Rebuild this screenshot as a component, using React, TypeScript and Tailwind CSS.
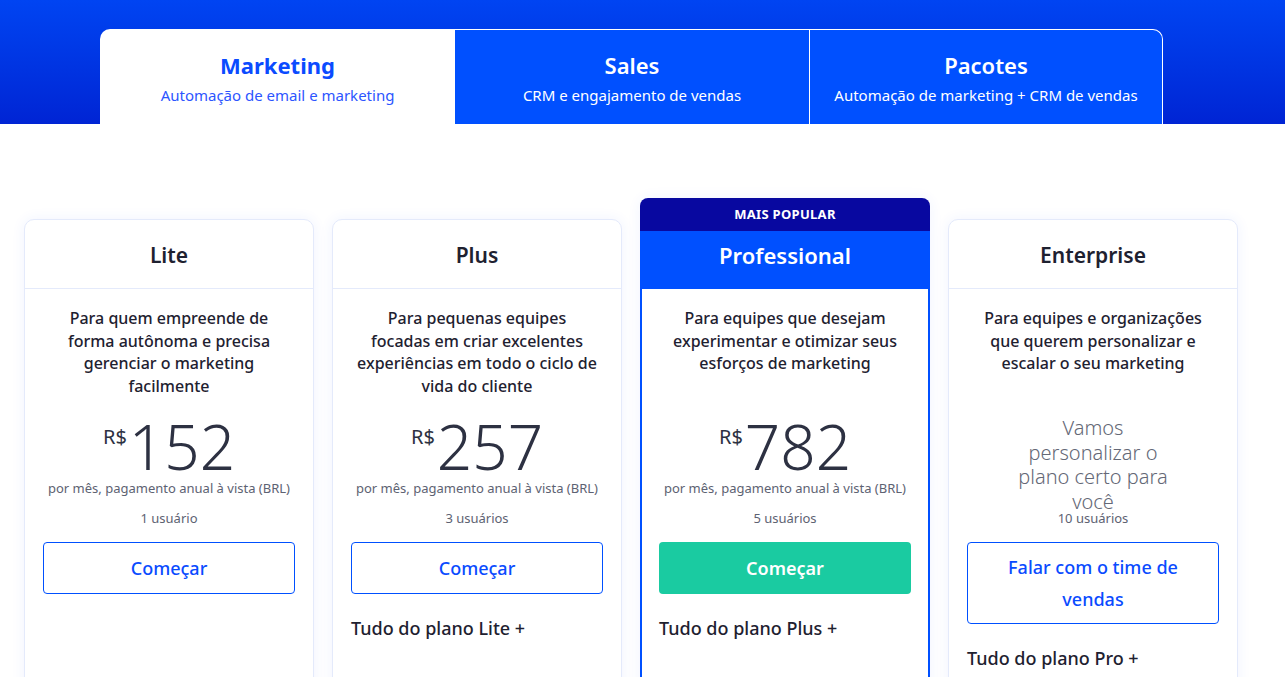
const font = { fontFamily: '"Noto Sans", "Open Sans", sans-serif' }

type Plan = {
	name: string
	desc: string
	price?: string
	users: string
	cta: string
	extra?: string
	popular?: boolean
}

const plans: Plan[] = [
	{
		name: 'Lite',
		desc: 'Para quem empreende de forma autônoma e precisa gerenciar o marketing facilmente',
		price: '152',
		users: '1 usuário',
		cta: 'Começar',
	},
	{
		name: 'Plus',
		desc: 'Para pequenas equipes focadas em criar excelentes experiências em todo o ciclo de vida do cliente',
		price: '257',
		users: '3 usuários',
		cta: 'Começar',
		extra: 'Tudo do plano Lite +',
	},
	{
		name: 'Professional',
		desc: 'Para equipes que desejam experimentar e otimizar seus esforços de marketing',
		price: '782',
		users: '5 usuários',
		cta: 'Começar',
		extra: 'Tudo do plano Plus +',
		popular: true,
	},
	{
		name: 'Enterprise',
		desc: 'Para equipes e organizações que querem personalizar e escalar o seu marketing',
		users: '10 usuários',
		cta: 'Falar com o time de vendas',
		extra: 'Tudo do plano Pro +',
	},
]

function Tabs() {
	return (
		<div className="bg-gradient-to-b from-[#0044f2] to-[#0024d4] pt-[29px]">
			<div className="ml-[100px] flex">
				<div className="flex h-[95px] w-[355px] flex-col items-center justify-center rounded-tl-[10px] bg-white pt-[2px]">
					<div className="text-[22px] font-bold leading-[28px] text-[#0b4bff]">Marketing</div>
					<div className="mt-[6px] text-[15px] leading-[20px] text-[#2c55ff]">
						Automação de email e marketing
					</div>
				</div>
				<div className="flex h-[95px] w-[354px] flex-col items-center justify-center border-t border-white bg-[#0050ff] pt-[2px] text-white">
					<div className="text-[22px] font-semibold leading-[28px]">Sales</div>
					<div className="mt-[6px] text-[15px] leading-[20px]">CRM e engajamento de vendas</div>
				</div>
				<div className="flex h-[95px] w-[354px] flex-col items-center justify-center rounded-tr-[10px] border-l border-r border-t border-white bg-[#0050ff] pt-[2px] text-white">
					<div className="text-[22px] font-semibold leading-[28px]">Pacotes</div>
					<div className="mt-[6px] text-[15px] leading-[20px]">Automação de marketing + CRM de vendas</div>
				</div>
			</div>
		</div>
	)
}

function PlanCard({ plan }: { plan: Plan }) {
	const popular = plan.popular
	return (
		<div
			className={`w-[290px] rounded-[10px] bg-white shadow-[0_0_14px_rgba(40,80,255,0.07)] ${
				popular ? '' : 'mt-[21px] border border-[#e4eafb]'
			}`}
		>
			{popular ? (
				<>
					<div className="flex h-[33px] items-center justify-center rounded-t-[8px] bg-[#0808a0] text-[13px] font-bold tracking-[0.3px] text-white">
						MAIS POPULAR
					</div>
					<div className="flex h-[58px] items-center justify-center bg-[#0050ff] pb-[10px] text-[22px] font-semibold text-white">
						{plan.name}
					</div>
				</>
			) : (
				<div className="flex h-[69px] items-center justify-center border-b border-[#e4eafb] pt-[4px] text-[21px] font-semibold text-[#1e2130]">
					{plan.name}
				</div>
			)}
			<div
				className={`h-[420px] text-center ${
					popular ? 'border-l-2 border-r-2 border-[#0050ff] px-[17px]' : 'px-[18px]'
				}`}
			>
				<div className="h-[108px] px-[6px] pt-[18px] text-[16px] font-medium leading-[22.5px] text-[#1e2130]">
					{plan.desc}
				</div>
				{plan.price ? (
					<>
						<div className="mt-[16px] flex h-[60px] items-start justify-center text-[#2d3142]">
							<span className="mr-[2px] mt-[14px] text-[20px] leading-none">R$</span>
							<span className="mt-[6px] text-[62px] font-light leading-[54px]">{plan.price}</span>
						</div>
						<div className="mt-[5px] whitespace-nowrap text-[13px] leading-[20px] text-[#5d6272]">
							por mês, pagamento anual à vista (BRL)
						</div>
					</>
				) : (
					<div className="mx-auto mt-[16px] h-[85px] w-[175px] pt-[3px] text-[20px] font-light leading-[24.5px] text-[#646876]">
						Vamos personalizar o plano certo para você
					</div>
				)}
				<div className="mt-[10px] text-[13px] leading-[20px] text-[#5d6272]">{plan.users}</div>
				{popular ? (
					<button className="mt-[14px] h-[52px] w-full rounded-[4px] bg-[#1acba1] text-[18px] font-semibold text-white">
						{plan.cta}
					</button>
				) : (
					<button
						className={`mt-[14px] w-full rounded-[4px] border border-[#0050ff] text-[18px] font-medium text-[#0a4bff] ${
							plan.price ? 'h-[52px]' : 'px-[22px] py-[8px] leading-[32px]'
						}`}
					>
						{plan.cta}
					</button>
				)}
				{plan.extra && (
					<div className="mt-[20px] text-left text-[18px] font-medium leading-[28px] text-[#1e2130]">
						{plan.extra}
					</div>
				)}
			</div>
		</div>
	)
}

export default function App() {
	return (
		<div className="h-[677px] overflow-hidden bg-white" style={font}>
			<Tabs />
			<div className="flex items-start gap-[18px] pl-[24px] pt-[74px]">
				{plans.map((p) => (
					<PlanCard key={p.name} plan={p} />
				))}
			</div>
		</div>
	)
}
